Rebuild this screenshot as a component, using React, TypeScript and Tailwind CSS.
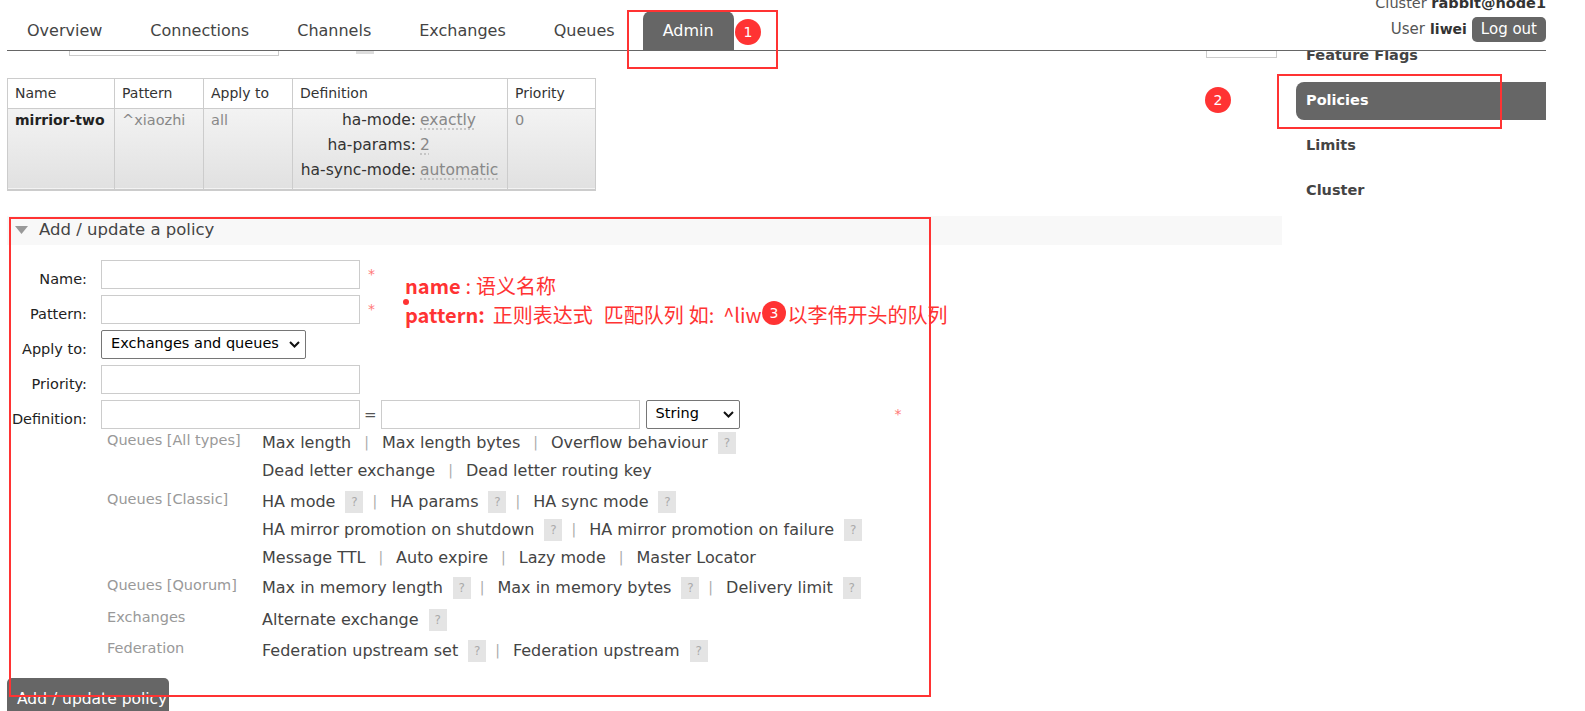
import React from 'react';

type HelpItem = { t: string; h?: boolean };
type HelpGroup = { label: string; mt: string; lines: HelpItem[][] };

const tabs = ['Overview', 'Connections', 'Channels', 'Exchanges', 'Queues', 'Admin'];
const navItems = ['Feature Flags', 'Policies', 'Limits', 'Cluster'];

const helpGroups: HelpGroup[] = [
  {
    label: 'Queues [All types]',
    mt: 'mt-0',
    lines: [
      [{ t: 'Max length' }, { t: 'Max length bytes' }, { t: 'Overflow behaviour', h: true }],
      [{ t: 'Dead letter exchange' }, { t: 'Dead letter routing key' }],
    ],
  },
  {
    label: 'Queues [Classic]',
    mt: 'mt-[3px]',
    lines: [
      [{ t: 'HA mode', h: true }, { t: 'HA params', h: true }, { t: 'HA sync mode', h: true }],
      [{ t: 'HA mirror promotion on shutdown', h: true }, { t: 'HA mirror promotion on failure', h: true }],
      [{ t: 'Message TTL' }, { t: 'Auto expire' }, { t: 'Lazy mode' }, { t: 'Master Locator' }],
    ],
  },
  {
    label: 'Queues [Quorum]',
    mt: 'mt-[2px]',
    lines: [[{ t: 'Max in memory length', h: true }, { t: 'Max in memory bytes', h: true }, { t: 'Delivery limit', h: true }]],
  },
  { label: 'Exchanges', mt: 'mt-[4px]', lines: [[{ t: 'Alternate exchange', h: true }]] },
  {
    label: 'Federation',
    mt: 'mt-[3px]',
    lines: [[{ t: 'Federation upstream set', h: true }, { t: 'Federation upstream', h: true }]],
  },
];

const definition = [
  ['ha-mode:', 'exactly'],
  ['ha-params:', '2'],
  ['ha-sync-mode:', 'automatic'],
];

const Chevron = () => (
  <svg width="11" height="7" viewBox="0 0 11 7" className="shrink-0">
    <path d="M1 1l4.5 4.5L10 1" fill="none" stroke="#111" strokeWidth="2" />
  </svg>
);

const FakeSelect: React.FC<{ label: string; width: string }> = ({ label, width }) => (
  <div className={`${width} h-[29px] border border-[#767676] rounded-[2px] bg-white flex items-center justify-between pl-[9px] pr-[5px] text-[14.5px] text-black`}>
    <span>{label}</span>
    <Chevron />
  </div>
);

const Asterisk: React.FC<{ className?: string }> = ({ className }) => (
  <span className={`text-[14px] leading-none text-[#f77] self-start mt-[7px] ${className ?? ''}`}>*</span>
);

const Badge: React.FC<{ n: string; className: string }> = ({ n, className }) => (
  <div className={`absolute rounded-full bg-[#f33] text-white flex items-center justify-center text-[14px] leading-none font-['DejaVu_Sans',sans-serif] ${className}`}>
    {n}
  </div>
);

const HelpLine: React.FC<{ items: HelpItem[] }> = ({ items }) => (
  <div className="h-[28px] flex items-center text-[16px] text-[#444]">
    {items.map((it, i) => (
      <React.Fragment key={it.t}>
        {i > 0 && (
          <span className={`text-[#aaa] text-[14px] ${items[i - 1].h ? 'ml-[9px] mr-[13px]' : 'mx-[13px]'}`}>|</span>
        )}
        <span>{it.t}</span>
        {it.h && (
          <span className="ml-[10px] w-[18px] h-[22px] bg-[#e4e4e4] text-[#aaa] text-[12px] flex items-center justify-center">?</span>
        )}
      </React.Fragment>
    ))}
  </div>
);

const FormRow: React.FC<{ label: string; children: React.ReactNode }> = ({ label, children }) => (
  <div className="flex items-start">
    <div className="w-[80px] text-right text-[14.5px] leading-[20px] text-[#222] pt-[9px]">{label}</div>
    <div className="ml-[14px] flex items-start">{children}</div>
  </div>
);

const TextInput: React.FC = () => <div className="w-[259px] h-[29px] border border-[#ccc] bg-white" />;

export default function App() {
  return (
    <div className="relative w-[1585px] h-[711px] overflow-hidden bg-white font-['DejaVu_Sans',Verdana,sans-serif] text-[#444]">
      {/* Header */}
      <header className="relative z-10 bg-white ml-[7px] w-[1539px] h-[51px] border-b border-[#666] flex items-end justify-between">
        <ul className="flex items-end gap-[8px]">
          {tabs.map((t) => (
            <li
              key={t}
              className={`h-[39px] px-[20px] flex items-center text-[16px] ${
                t === 'Admin' ? 'bg-[#666] text-white rounded-t-[8px]' : 'text-[#444]'
              }`}
            >
              {t}
            </li>
          ))}
        </ul>
        <div className="self-start flex flex-col items-end -mt-[7px]">
          <div className="h-[20px] leading-[20px] text-[14.5px] text-[#555]">
            Cluster <b className="text-[#333]">rabbit@node1</b>
          </div>
          <div className="mt-[4px] flex items-center text-[15px] text-[#555]">
            User <b className="ml-[5px] text-[14px] text-[#333]">liwei</b>
            <span className="ml-[5px] h-[25px] px-[9px] flex items-center rounded-[5px] bg-[#666] text-white">Log out</span>
          </div>
        </div>
      </header>

      <div className="flex pl-[7px]">
        <main className="w-[1275px]">
          {/* bits of the scrolled-away filter row */}
          <div className="flex items-start h-[8px]">
            <div className="ml-[62px] w-[210px] h-[5px] border-x border-b border-[#ccc]" />
            <div className="ml-[77px] w-[18px] h-[3px] bg-[#ddd]" />
            <div className="ml-[832px] w-[71px] h-[7px] border-x border-b border-[#ccc]" />
          </div>

          {/* Policies table */}
          <table className="mt-[19px] border-collapse border border-[#ccc] text-[14px] text-[#333] table-fixed w-[588px]">
            <thead>
              <tr className="h-[30px] bg-white">
                <th className="w-[107px] border border-[#ccc] px-[7px] text-left font-normal">Name</th>
                <th className="w-[89px] border border-[#ccc] px-[7px] text-left font-normal">Pattern</th>
                <th className="w-[89px] border border-[#ccc] px-[7px] text-left font-normal">Apply to</th>
                <th className="w-[215px] border border-[#ccc] px-[7px] text-left font-normal">Definition</th>
                <th className="w-[88px] border border-[#ccc] px-[7px] text-left font-normal">Priority</th>
              </tr>
            </thead>
            <tbody>
              <tr className="h-[81px] bg-linear-to-b from-[#f3f3f3] to-[#e1e1e1] border-b-2 border-[#ccc] leading-[25px] align-top">
                <td className="border border-[#ccc] px-[7px] font-bold text-[14px] text-[#222] whitespace-nowrap">
                  <div className="-mt-[1px]">mirrior-two</div>
                </td>
                <td className="border border-[#ccc] px-[7px] text-[14.5px] text-[#888]">
                  <div className="-mt-[1px]">^xiaozhi</div>
                </td>
                <td className="border border-[#ccc] px-[7px] text-[14.5px] text-[#888]">
                  <div className="-mt-[1px]">all</div>
                </td>
                <td className="border border-[#ccc] pl-[5px] pr-[2px] text-[15.5px]">
                  <div className="-mt-[1px] grid grid-cols-[118px_auto] gap-x-[4px]">
                    {definition.map(([k, v]) => (
                      <React.Fragment key={k}>
                        <span className="text-right text-[#333]">{k}</span>
                        <span className="text-[#888] underline decoration-dotted decoration-[#bbb] underline-offset-4">{v}</span>
                      </React.Fragment>
                    ))}
                  </div>
                </td>
                <td className="border border-[#ccc] px-[7px] text-[14.5px] text-[#888]">
                  <div className="-mt-[1px]">0</div>
                </td>
              </tr>
            </tbody>
          </table>

          {/* Add / update a policy */}
          <section className="mt-[25px]">
            <div className="h-[29px] bg-[#f8f8f8] flex items-center pl-[8px] text-[16.5px] text-[#444]">
              <svg width="13" height="8" viewBox="0 0 13 8">
                <path d="M0 0h13L6.5 8z" fill="#999" />
              </svg>
              <span className="ml-[11px]">Add / update a policy</span>
            </div>

            <div className="mt-[15px] flex flex-col gap-[6px]">
              <FormRow label="Name:">
                <TextInput />
                <Asterisk className="ml-[8px]" />
              </FormRow>
              <FormRow label="Pattern:">
                <TextInput />
                <Asterisk className="ml-[8px]" />
              </FormRow>
              <FormRow label="Apply to:">
                <FakeSelect label="Exchanges and queues" width="w-[205px]" />
              </FormRow>
              <FormRow label="Priority:">
                <TextInput />
              </FormRow>
              <FormRow label="Definition:">
                <TextInput />
                <span className="mx-[4px] mt-[4px] text-[15px] text-[#555]">=</span>
                <TextInput />
                <div className="ml-[6px]">
                  <FakeSelect label="String" width="w-[94px]" />
                </div>
                <Asterisk className="ml-[155px]" />
              </FormRow>
            </div>

            <div className="ml-[100px]">
              {helpGroups.map((g) => (
                <div key={g.label} className={`flex ${g.mt}`}>
                  <div className="w-[155px] h-[28px] flex items-center -mt-[2px] text-[14.5px] text-[#999]">{g.label}</div>
                  <div>
                    {g.lines.map((line, i) => (
                      <HelpLine key={i} items={line} />
                    ))}
                  </div>
                </div>
              ))}
            </div>

            <button className="mt-[13px] w-[162px] h-[40px] rounded-[5px] bg-[#666] text-white text-[15.5px] text-left pl-[10px] pt-[4px]">
              Add / update policy
            </button>
          </section>
        </main>

        {/* Admin side nav */}
        <nav className="ml-[14px] w-[250px] -mt-[14px] flex flex-col gap-[7px]">
          {navItems.map((n) => (
            <div
              key={n}
              className={`h-[38px] pl-[10px] flex items-center text-[14.5px] font-bold ${
                n === 'Policies' ? 'bg-[#666] text-white rounded-l-[8px]' : 'text-[#444]'
              }`}
            >
              {n}
            </div>
          ))}
        </nav>
      </div>

      {/* Annotations drawn over the screenshot */}
      <div className="absolute left-[627px] top-[10px] w-[151px] h-[59px] border-2 border-[#f33] z-20" />
      <Badge n="1" className="left-[735px] top-[19px] w-[26px] h-[26px] z-20" />

      <div className="absolute left-[1277px] top-[74px] w-[225px] h-[55px] border-2 border-[#f33] z-20" />
      <Badge n="2" className="left-[1205px] top-[87px] w-[26px] h-[26px] z-20" />

      <div className="absolute left-[9px] top-[217px] w-[922px] h-[480px] border-2 border-[#f33] z-20" />

      <div className="absolute left-[403px] top-[299px] w-[6px] h-[6px] rounded-full bg-[#f33] z-20" />
      <div className="absolute left-[405px] top-[271px] z-20 text-[20px] leading-[29px] text-[#f33] font-['Noto_Sans_CJK_SC',sans-serif] whitespace-nowrap">
        <div className="flex">
          <span className="font-semibold">name</span>
          <span className="ml-[5px]">:</span>
          <span className="ml-[5px]">语义名称</span>
        </div>
        <div className="flex">
          <span className="font-semibold">pattern:</span>
          <span className="ml-[8px]">正则表达式</span>
          <span className="ml-[11px]">匹配队列</span>
          <span className="ml-[5px]">如:</span>
          <span className="ml-[9px]">^liw</span>
          <span className="inline-block w-[26px]" />
          <span>以李伟开头的队列</span>
        </div>
      </div>
      <Badge n="3" className="left-[762px] top-[301px] w-[24px] h-[24px] z-30" />
    </div>
  );
}
